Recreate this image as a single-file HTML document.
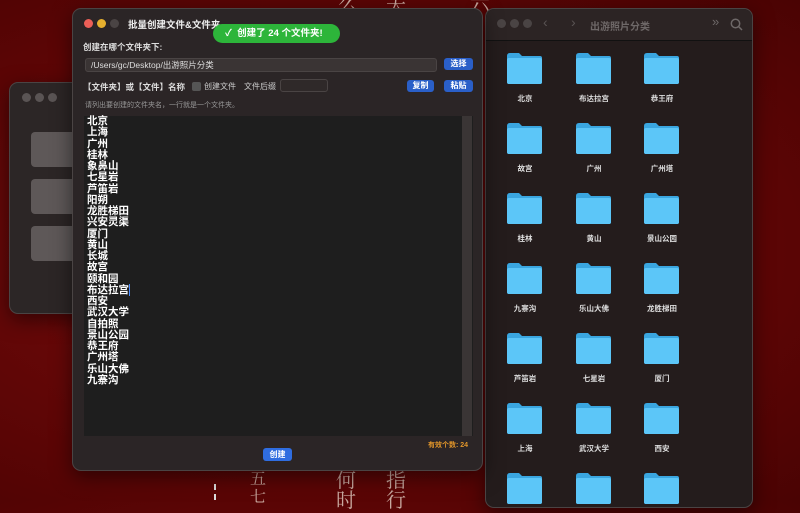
<!DOCTYPE html>
<html><head><meta charset="utf-8"><style>
*{margin:0;padding:0;box-sizing:border-box}
body{width:800px;height:500px;overflow:hidden;position:relative;background:radial-gradient(ellipse at 40% 50%,#7a0c0c,#5a0505 70%,#4a0303);font-family:"Liberation Sans","Noto Sans CJK SC",sans-serif;color:#ddd}
.abs{position:absolute}
.dot{position:absolute;width:9px;height:9px;border-radius:50%}
.bgt{position:absolute;color:#c9a9a0;font-family:"Noto Serif CJK SC",serif;font-size:20px}
.win{position:absolute;border-radius:9px;border:1px solid #4a4444;box-shadow:0 6px 20px rgba(0,0,0,.5)}
.btn{position:absolute;background:#2a5fc8;color:#fff;font-size:8px;font-weight:bold;border-radius:3px;text-align:center;line-height:12px;height:12px}
.f{position:absolute;width:37px;height:33px}
.fl{position:absolute;width:70px;text-align:center;font-size:7.5px;font-weight:bold;color:#ddd}
.lines{position:absolute;left:87px;top:116px;font-size:10.5px;font-weight:bold;color:#fff;line-height:11.25px}
</style></head><body>
<div class="bgt" style="left:338px;top:-12px">么</div>
<div class="bgt" style="left:386px;top:-12px">夫</div>
<div class="bgt" style="left:470px;top:-12px">六</div>
<div class="bgt" style="left:250px;top:466px;font-size:16px">五</div>
<div class="bgt" style="left:250px;top:484px;font-size:16px">七</div>
<div class="bgt" style="left:336px;top:464px">何</div>
<div class="bgt" style="left:336px;top:484px">时</div>
<div class="bgt" style="left:386px;top:464px">指</div>
<div class="bgt" style="left:386px;top:484px">行</div>
<div class="abs" style="left:214px;top:484px;width:2px;height:16px;border-left:2px dashed #ddd"></div>

<!-- left window -->
<div class="win" style="left:9px;top:82px;width:90px;height:232px;background:#2c2626">
<div class="dot" style="left:12px;top:10px;background:#5a5454"></div>
<div class="dot" style="left:25px;top:10px;background:#5a5454"></div>
<div class="dot" style="left:38px;top:10px;background:#5a5454"></div>
<div class="abs" style="left:21px;top:49px;width:60px;height:35px;background:#5e5858;border-radius:4px"></div>
<div class="abs" style="left:21px;top:96px;width:60px;height:35px;background:#5e5858;border-radius:4px"></div>
<div class="abs" style="left:21px;top:143px;width:60px;height:35px;background:#5e5858;border-radius:4px"></div>
</div>

<!-- finder -->
<div class="win" style="left:485px;top:8px;width:268px;height:500px;background:#241c1c">
<div class="abs" style="left:0;top:0;width:266px;height:32px;background:#2c2424;border-bottom:1px solid #111;border-radius:9px 9px 0 0"></div>
<div class="dot" style="left:11px;top:10px;background:#4a4444"></div>
<div class="dot" style="left:24px;top:10px;background:#4a4444"></div>
<div class="dot" style="left:37px;top:10px;background:#4a4444"></div>
<div class="abs" style="left:57px;top:5px;font-size:14px;color:#5a5454">‹</div>
<div class="abs" style="left:85px;top:5px;font-size:14px;color:#5a5454">›</div>
<div class="abs" style="left:104px;top:9px;font-size:10px;font-weight:bold;color:#6e6868">出游照片分类</div>
<div class="abs" style="left:226px;top:5px;font-size:13px;color:#6e6868">»</div>
<svg class="abs" style="left:244px;top:9px" width="13" height="13"><circle cx="5.5" cy="5.5" r="4.2" stroke="#6e6868" stroke-width="1.5" fill="none"/><line x1="8.5" y1="8.5" x2="12" y2="12" stroke="#6e6868" stroke-width="1.5"/></svg>
</div>
<svg width="0" height="0" style="position:absolute"><defs><symbol id="fd" viewBox="0 0 37 33"><path d="M1 4 Q1 1 4 1 L13 1 L16 4 L34 4 Q36 4 36 6 L36 30 Q36 32 34 32 L3 32 Q1 32 1 30Z" fill="#3aa6e0"/><path d="M1 8 Q1 6 3 6 L34 6 Q36 6 36 8 L36 30 Q36 32 34 32 L3 32 Q1 32 1 30Z" fill="#5cc6f8"/></symbol></defs></svg>
<div id="grid"></div>

<!-- main window -->
<div class="win" style="left:72px;top:8px;width:411px;height:463px;background:#2b2526">
<div class="dot" style="left:11px;top:10px;background:#ec5f57"></div>
<div class="dot" style="left:24px;top:10px;background:#e6b02e"></div>
<div class="dot" style="left:37px;top:10px;background:#4a4444"></div>
<div class="abs" style="left:55px;top:8px;font-size:9.5px;font-weight:bold;color:#eee">批量创建文件&amp;文件夹</div>
<div class="abs" style="left:10px;top:32px;font-size:8.5px;font-weight:bold;color:#ddd">创建在哪个文件夹下:</div>
<div class="abs" style="left:12px;top:49px;width:352px;height:14px;background:#3a3434;border:1px solid #4a4444;border-radius:3px;font-size:8.5px;color:#ddd;padding-left:5px;line-height:12px">/Users/gc/Desktop/出游照片分类</div>
<div class="btn" style="left:371px;top:49px;width:29px">选择</div>
<div class="abs" style="left:10px;top:72px;font-size:8.5px;font-weight:bold;color:#ddd">【文件夹】或【文件】名称</div>
<div class="abs" style="left:119px;top:73px;width:9px;height:9px;background:#555;border-radius:2px"></div>
<div class="abs" style="left:131px;top:72px;font-size:8px;color:#ccc">创建文件</div>
<div class="abs" style="left:171px;top:72px;font-size:8px;color:#ccc">文件后缀</div>
<div class="abs" style="left:207px;top:70px;width:48px;height:13px;background:#2f2929;border:1px solid #4a4444;border-radius:3px"></div>
<div class="btn" style="left:334px;top:71px;width:27px">复制</div>
<div class="btn" style="left:371px;top:71px;width:29px">粘贴</div>
<div class="abs" style="left:12px;top:91px;font-size:7px;color:#999">请列出要创建的文件夹名，一行就是一个文件夹。</div>
<div class="abs" style="left:11px;top:107px;width:389px;height:320px;background:#1e1e1e"></div>
<div class="abs" style="left:389px;top:107px;width:10px;height:320px;background:#3a3535"></div>
<div class="abs" style="left:355px;top:431px;font-size:7px;font-weight:bold;color:#e0952a">有效个数: 24</div>
<div class="btn" style="left:190px;top:439px;width:29px;height:13px;line-height:13px;background:#2f6de0">创建</div>
</div>
<div class="lines">北京<br>上海<br>广州<br>桂林<br>象鼻山<br>七星岩<br>芦笛岩<br>阳朔<br>龙胜梯田<br>兴安灵渠<br>厦门<br>黄山<br>长城<br>故宫<br>颐和园<br>布达拉宫<span style="border-right:1px solid #4a8cff;background:#2a4f8a">&#8203;</span><br>西安<br>武汉大学<br>自拍照<br>景山公园<br>恭王府<br>广州塔<br>乐山大佛<br>九寨沟</div>
<div class="abs" style="left:213px;top:24px;width:127px;height:19px;background:#2db53a;border-radius:10px;color:#fff;font-size:9.5px;font-weight:bold;line-height:19px;padding-left:12px">✓&nbsp; 创建了 24 个文件夹!</div>
<script>
var n=[["北京","布达拉宫","恭王府"],["故宫","广州","广州塔"],["桂林","黄山","景山公园"],["九寨沟","乐山大佛","龙胜梯田"],["芦笛岩","七星岩","厦门"],["上海","武汉大学","西安"],["","",""]];
var xs=[506,575,643],h="";
n.forEach(function(r,i){r.forEach(function(t,j){var y=52+i*70;h+='<svg class="f" style="left:'+xs[j]+'px;top:'+y+'px"><use href="#fd"/></svg><div class="fl" style="left:'+(xs[j]-16)+'px;top:'+(y+41)+'px">'+t+'</div>';});});
document.getElementById('grid').innerHTML=h;
</script>
</body></html>
